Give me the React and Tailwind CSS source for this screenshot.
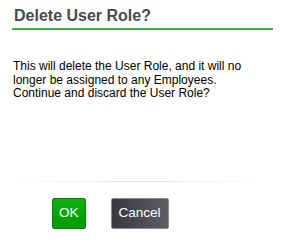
export default function App() {
  return (
    <div className="w-[285px] h-[242px] bg-white font-['Liberation_Sans',Arial,sans-serif] px-3 pt-[6px]">
      <div className="border-b-2 border-[#3daf3a] pb-[3px] pl-[2px]">
        <h1 className="text-[16px] leading-[19px] font-bold text-[#4a4a4a]">Delete User Role?</h1>
      </div>

      <p className="mt-[30px] pl-px text-[12px] leading-[13.5px] text-black pr-2">
        This will delete the User Role, and it will no longer be assigned to any Employees.
        Continue and discard the User Role?
      </p>

      <div className="mt-[80px] h-px w-[254px] bg-gradient-to-r from-transparent via-[#e2e2e2] to-transparent" />

      <div className="flex gap-[25px] pl-10 mt-4">
        <button className="h-[31px] px-[6px] rounded-[2px] border border-[#0a7d0a] bg-gradient-to-b from-[#12b012] to-[#009a00] text-white text-[13.5px] leading-none">
          OK
        </button>
        <button className="h-[31px] px-[7px] rounded-[2px] border border-[#8a8b90] bg-gradient-to-r from-[#38393d] to-[#5e5f64] text-white text-[13.5px] leading-none">
          Cancel
        </button>
      </div>
    </div>
  );
}
